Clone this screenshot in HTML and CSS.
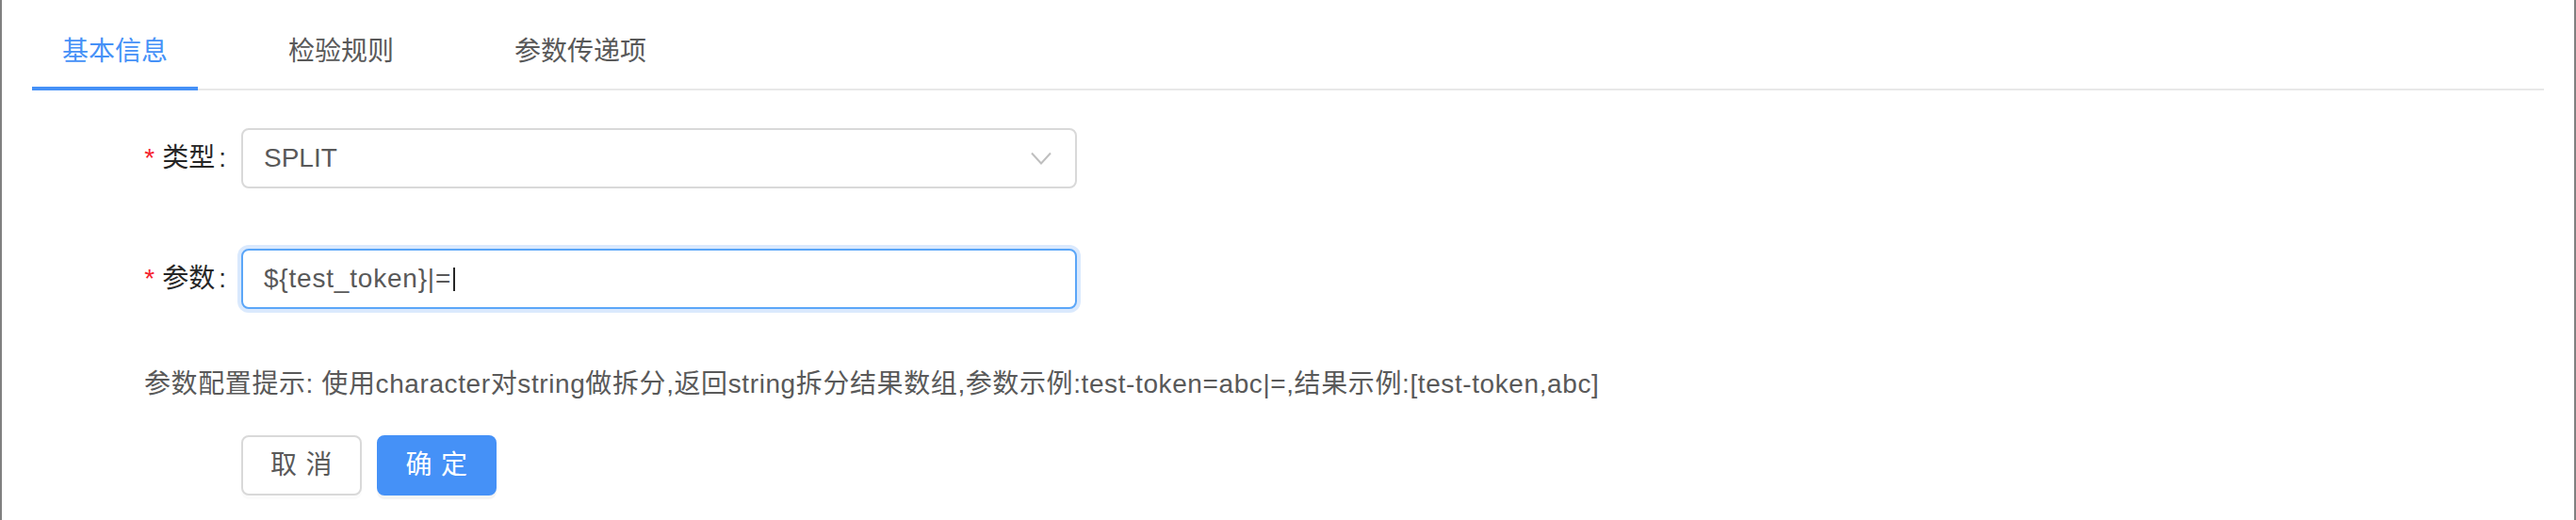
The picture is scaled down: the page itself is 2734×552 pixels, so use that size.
FILE: index.html
```html
<!DOCTYPE html>
<html lang="zh-CN">
<head>
<meta charset="utf-8">
<title>参数配置</title>
<link rel="stylesheet" href="styles.css">
</head>
<body>
<div class="frame">
  <div class="tabs">
    <div class="tab active">基本信息</div>
    <div class="tab">检验规则</div>
    <div class="tab">参数传递项</div>
  </div>
  <div class="form">
    <div class="row">
      <div class="label"><span class="req">*</span>类型<span class="colon">:</span></div>
      <div class="control select">
        <span class="value">SPLIT</span>
        <svg class="arrow" width="22" height="14" viewBox="0 0 22 14"><polyline points="1,1.5 11,12.5 21,1.5" fill="none" stroke="#bfbfbf" stroke-width="2"/></svg>
      </div>
    </div>
    <div class="row">
      <div class="label"><span class="req">*</span>参数<span class="colon">:</span></div>
      <div class="control input focused"><span class="value">${test_token}|=</span><span class="caret"></span></div>
    </div>
    <div class="hint">参数配置提示: 使用character对string做拆分,返回string拆分结果数组,参数示例:test-token=abc|=,结果示例:[test-token,abc]</div>
    <div class="actions">
      <button class="btn"><span>取消</span></button>
      <button class="btn primary"><span>确定</span></button>
    </div>
  </div>
</div>
</body>
</html>
```
FILE: styles.css
```css
html, body {
  margin: 0;
  padding: 0;
  background: #fff;
}
body {
  font-family: "Liberation Sans", "Noto Sans CJK SC", sans-serif;
  font-size: 28px;
  color: #595959;
}
.frame {
  box-sizing: border-box;
  width: 2734px;
  height: 552px;
  border-left: 2px solid #808080;
  border-right: 2px solid #808080;
  padding: 0 32px;
  background: #fff;
}
.tabs {
  display: flex;
  gap: 64px;
  border-bottom: 2px solid #e8e8e8;
}
.tab {
  position: relative;
  padding: 35px 32px 19px;
  line-height: 40px;
  color: #595959;
  white-space: nowrap;
}
.tab.active {
  color: #4591f7;
}
.tab.active::after {
  content: "";
  position: absolute;
  left: 0;
  right: 0;
  bottom: -2px;
  height: 4px;
  background: #4591f7;
}
.form {
  padding-top: 40px;
}
.row {
  display: flex;
  align-items: center;
  margin-bottom: 64px;
}
.label {
  width: 222px;
  text-align: right;
  color: #262626;
  line-height: 40px;
  white-space: nowrap;
}
.req {
  color: #f5222d;
  margin-right: 8px;
}
.colon {
  margin: 0 16px 0 4px;
}
.control {
  box-sizing: border-box;
  width: 887px;
  height: 64px;
  border: 2px solid #d9d9d9;
  border-radius: 8px;
  padding: 0 22px;
  display: flex;
  align-items: center;
  line-height: 40px;
  color: #595959;
  background: #fff;
  white-space: nowrap;
}
.select {
  justify-content: space-between;
}
.select .arrow {
  margin-right: 3px;
}
.input.focused {
  border-color: #5ba6f8;
  box-shadow: 0 0 0 4px rgba(69, 145, 247, 0.2);
}
.input .value {
  letter-spacing: 0.8px;
}
.caret {
  display: inline-block;
  width: 2px;
  height: 25px;
  background: #262626;
  margin-left: 2px;
}
.hint {
  margin-top: -4px;
  padding-left: 119px;
  line-height: 40px;
  color: #595959;
  white-space: nowrap;
  letter-spacing: 0.6px;
}
.actions {
  display: flex;
  gap: 16px;
  margin-top: 34px;
  padding-left: 222px;
}
.btn {
  box-sizing: border-box;
  height: 64px;
  padding: 0 29px;
  border: 2px solid #d9d9d9;
  border-radius: 8px;
  background: #fff;
  color: #595959;
  font-family: inherit;
  font-size: 28px;
  line-height: 40px;
  white-space: nowrap;
  box-shadow: 0 4px 0 rgba(0, 0, 0, 0.015);
}
.btn span {
  letter-spacing: 0.34em;
  margin-right: -0.34em;
}
.btn.primary {
  background: #4591f7;
  border-color: #4591f7;
  color: #fff;
  box-shadow: 0 4px 0 rgba(0, 0, 0, 0.045);
}
```
